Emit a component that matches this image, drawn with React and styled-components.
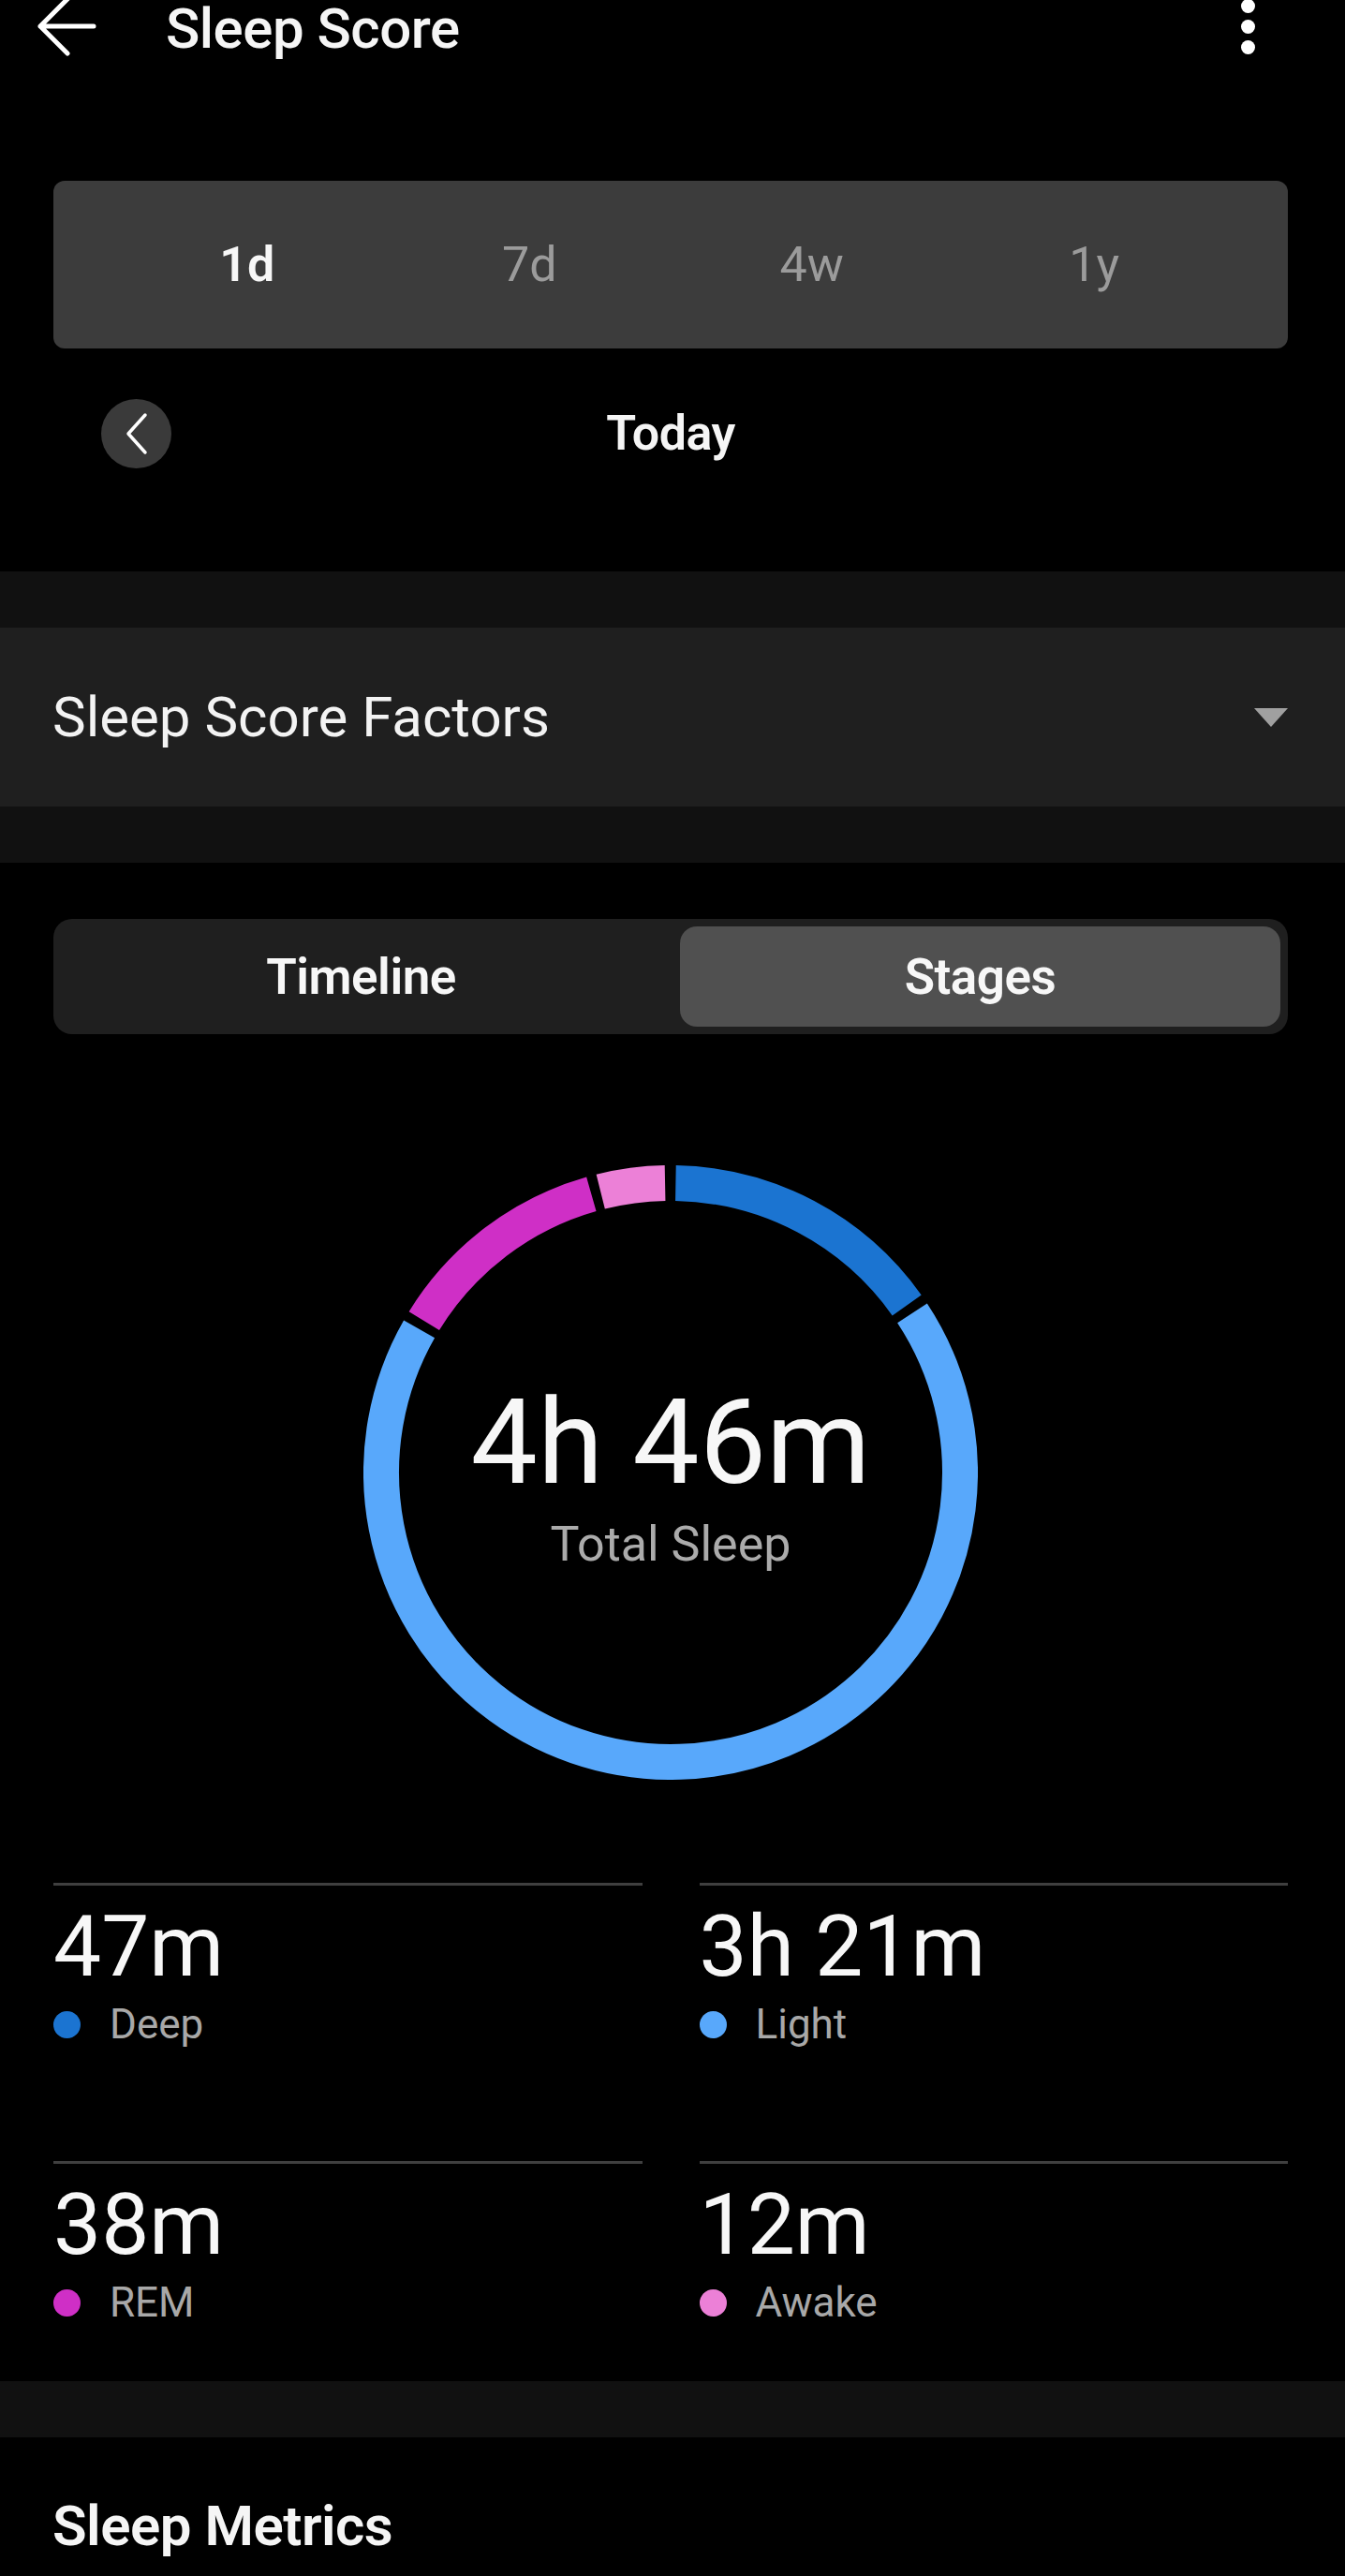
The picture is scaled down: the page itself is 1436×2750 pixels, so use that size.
import React from "react";
import styled, { createGlobalStyle } from "styled-components";

const GlobalStyle = createGlobalStyle`
    body {
        margin: 0;
        background: #000;
        font-family: Roboto, "Liberation Sans", sans-serif;
        color: #f5f5f5;
    }
`;

const Page = styled.div`
    width: 1436px;
    min-height: 2750px;
    background: #000;
`;

const Header = styled.div`
    display: flex;
    align-items: center;
    height: 62px;
    margin-bottom: -6px;
    padding: 0 96px 0 38px;
`;

const BackIcon = styled.svg`
    margin-bottom: 6px;
`;

const Title = styled.div`
    margin-left: 73px;
    font-size: 60px;
    font-weight: 500;
    line-height: 1;
    letter-spacing: -0.5px;
`;

const Kebab = styled.div`
    margin-left: auto;
    margin-bottom: 6px;
    display: flex;
    flex-direction: column;
    gap: 7px;
    span {
        width: 15px;
        height: 15px;
        border-radius: 50%;
        background: #fff;
    }
`;

const TopSection = styled.div`
    padding: 137px 61px 110px 57px;
`;

const Range = styled.div`
    display: grid;
    grid-template-columns: repeat(4, 1fr);
    align-items: center;
    height: 179px;
    padding: 0 56px;
    background: #3c3c3c;
    border-radius: 12px;
`;

const RangeItem = styled.div`
    text-align: center;
    font-size: 52px;
    line-height: 1;
    font-weight: ${(p) => (p.$active ? 600 : 400)};
    color: ${(p) => (p.$active ? "#f7f7f7" : "#9b9b9b")};
`;

const DateRow = styled.div`
    display: grid;
    grid-template-columns: 1fr auto 1fr;
    align-items: center;
    margin-top: 54px;
    height: 74px;
`;

const RoundBtn = styled.div`
    width: 75px;
    height: 74px;
    margin-left: 51px;
    border-radius: 50%;
    background: #3a3a3a;
    display: flex;
    align-items: center;
    justify-content: center;
`;

const DateLabel = styled.div`
    font-size: 52px;
    font-weight: 600;
    line-height: 1;
    letter-spacing: -0.5px;
`;

const Band = styled.div`
    height: 60px;
    background: #111;
`;

const FactorsRow = styled.div`
    display: flex;
    align-items: center;
    justify-content: space-between;
    height: 191px;
    padding: 0 61px 0 56px;
    background: #1f1f1f;
`;

const FactorsLabel = styled.div`
    font-size: 60px;
    line-height: 1;
    color: #f3f3f3;
`;

const Caret = styled.div`
    width: 0;
    height: 0;
    border-left: 18px solid transparent;
    border-right: 18px solid transparent;
    border-top: 20px solid #a0a0a0;
`;

const Content = styled.div`
    padding: 60px 61px 62px 57px;
`;

const Toggle = styled.div`
    display: grid;
    grid-template-columns: 1fr 1fr;
    column-gap: 20px;
    height: 123px;
    padding: 8px;
    box-sizing: border-box;
    background: #1f1f1f;
    border-radius: 20px;
`;

const ToggleItem = styled.div`
    display: flex;
    align-items: center;
    justify-content: center;
    border-radius: 18px;
    background: ${(p) => (p.$active ? "#505050" : "transparent")};
    font-size: 53px;
    font-weight: 600;
    letter-spacing: -0.5px;
    color: #f7f7f7;
`;

const RingWrap = styled.div`
    position: relative;
    width: 656px;
    height: 656px;
    margin: 140px auto 0;
`;

const RingCenter = styled.div`
    position: absolute;
    inset: 0;
    display: flex;
    flex-direction: column;
    align-items: center;
    justify-content: center;
    padding-top: 6px;
`;

const Total = styled.div`
    font-size: 127px;
    line-height: 1;
    color: #f7f7f7;
`;

const TotalLabel = styled.div`
    margin-top: 20px;
    font-size: 52px;
    line-height: 1;
    color: #ababab;
`;

const StatGrid = styled.div`
    display: grid;
    grid-template-columns: 1fr 1fr;
    column-gap: 61px;
    row-gap: 124px;
    margin-top: 110px;
`;

const Stat = styled.div`
    border-top: 3px solid #3f3f3f;
    padding-top: 20px;
`;

const StatValue = styled.div`
    font-size: 91px;
    line-height: 1;
    color: #f7f7f7;
`;

const StatKey = styled.div`
    display: flex;
    align-items: center;
    gap: 31px;
    margin-top: 15px;
    font-size: 44px;
    line-height: 1;
    color: #a8a8a8;
`;

const Dot = styled.span`
    width: 29px;
    height: 29px;
    border-radius: 50%;
    background: ${(p) => p.$color};
`;

const SectionTitle = styled.div`
    padding: 65px 56px 0;
    font-size: 60px;
    font-weight: 600;
    line-height: 1;
    letter-spacing: -0.5px;
`;

const stages = [
    { key: "Deep", value: "47m", color: "#1b74d1", from: 1, to: 54.7 },
    { key: "Light", value: "3h 21m", color: "#58a8fb", from: 56.6, to: 299.7 },
    { key: "REM", value: "38m", color: "#cf2fc6", from: 301.6, to: 344.1 },
    { key: "Awake", value: "12m", color: "#ec80d7", from: 346, to: 358.9 },
];

function arc(a0, a1, r, c) {
    const rad = (a) => (a * Math.PI) / 180;
    const x0 = c + r * Math.sin(rad(a0));
    const y0 = c - r * Math.cos(rad(a0));
    const x1 = c + r * Math.sin(rad(a1));
    const y1 = c - r * Math.cos(rad(a1));
    const large = a1 - a0 > 180 ? 1 : 0;
    return `M ${x0} ${y0} A ${r} ${r} 0 ${large} 1 ${x1} ${y1}`;
}

function Ring() {
    return (
        <svg width="656" height="656" viewBox="0 0 656 656">
            {stages.map((s) => (
                <path
                    key={s.key}
                    d={arc(s.from, s.to, 309, 328)}
                    fill="none"
                    stroke={s.color}
                    strokeWidth="38"
                />
            ))}
        </svg>
    );
}

export default function App() {
    return (
        <Page>
            <GlobalStyle />
            <Header>
                <BackIcon width="66" height="64" viewBox="0 0 66 64">
                    <path
                        d="M62 32 H5 M34 3 L5 32 L34 61"
                        fill="none"
                        stroke="#fff"
                        strokeWidth="5"
                        strokeLinecap="round"
                        strokeLinejoin="round"
                    />
                </BackIcon>
                <Title>Sleep Score</Title>
                <Kebab>
                    <span />
                    <span />
                    <span />
                </Kebab>
            </Header>

            <TopSection>
                <Range>
                    <RangeItem $active>1d</RangeItem>
                    <RangeItem>7d</RangeItem>
                    <RangeItem>4w</RangeItem>
                    <RangeItem>1y</RangeItem>
                </Range>
                <DateRow>
                    <RoundBtn>
                        <svg width="26" height="46" viewBox="0 0 26 46">
                            <path
                                d="M22 3 L4 23 L22 43"
                                fill="none"
                                stroke="#fff"
                                strokeWidth="3.5"
                                strokeLinecap="round"
                                strokeLinejoin="round"
                            />
                        </svg>
                    </RoundBtn>
                    <DateLabel>Today</DateLabel>
                    <div />
                </DateRow>
            </TopSection>

            <Band />
            <FactorsRow>
                <FactorsLabel>Sleep Score Factors</FactorsLabel>
                <Caret />
            </FactorsRow>
            <Band />

            <Content>
                <Toggle>
                    <ToggleItem>Timeline</ToggleItem>
                    <ToggleItem $active>Stages</ToggleItem>
                </Toggle>

                <RingWrap>
                    <Ring />
                    <RingCenter>
                        <Total>4h 46m</Total>
                        <TotalLabel>Total Sleep</TotalLabel>
                    </RingCenter>
                </RingWrap>

                <StatGrid>
                    {stages.map((s) => (
                        <Stat key={s.key}>
                            <StatValue>{s.value}</StatValue>
                            <StatKey>
                                <Dot $color={s.color} />
                                {s.key}
                            </StatKey>
                        </Stat>
                    ))}
                </StatGrid>
            </Content>

            <Band />
            <SectionTitle>Sleep Metrics</SectionTitle>
        </Page>
    );
}
